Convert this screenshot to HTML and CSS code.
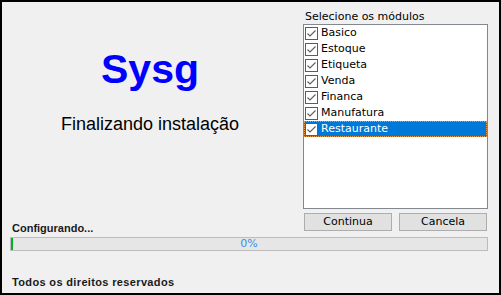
FILE: index.html
```html
<!DOCTYPE html>
<html lang="pt-BR">
<head>
    <meta charset="UTF-8">
    <title>Sysg - Instalação</title>
    <link rel="stylesheet" href="styles.css">
</head>
<body>
    <div class="window">
        <div class="layout">
            <div class="hero">
                <h1 class="logo">Sysg</h1>
                <p class="subtitle">Finalizando instalação</p>
            </div>
            <div class="modules">
                <div class="modules-label">Selecione os módulos</div>
                <ul class="module-list">
                    <li class="module"><span class="check"><svg viewBox="0 0 11 11" width="11" height="11"><path d="M1.5 5.5 L4 8 L9.5 2.5" /></svg></span>Basico</li>
                    <li class="module"><span class="check"><svg viewBox="0 0 11 11" width="11" height="11"><path d="M1.5 5.5 L4 8 L9.5 2.5" /></svg></span>Estoque</li>
                    <li class="module"><span class="check"><svg viewBox="0 0 11 11" width="11" height="11"><path d="M1.5 5.5 L4 8 L9.5 2.5" /></svg></span>Etiqueta</li>
                    <li class="module"><span class="check"><svg viewBox="0 0 11 11" width="11" height="11"><path d="M1.5 5.5 L4 8 L9.5 2.5" /></svg></span>Venda</li>
                    <li class="module"><span class="check"><svg viewBox="0 0 11 11" width="11" height="11"><path d="M1.5 5.5 L4 8 L9.5 2.5" /></svg></span>Financa</li>
                    <li class="module"><span class="check"><svg viewBox="0 0 11 11" width="11" height="11"><path d="M1.5 5.5 L4 8 L9.5 2.5" /></svg></span>Manufatura</li>
                    <li class="module selected"><span class="check"><svg viewBox="0 0 11 11" width="11" height="11"><path d="M1.5 5.5 L4 8 L9.5 2.5" /></svg></span>Restaurante</li>
                </ul>
            </div>
            <div class="status">Configurando...</div>
            <div class="actions">
                <button class="btn">Continua</button>
                <button class="btn">Cancela</button>
            </div>
        </div>
        <div class="progress">
            <div class="progress-fill" style="width: 2px"></div>
            <span class="progress-text">0%</span>
        </div>
        <div class="footer">Todos os direitos reservados</div>
    </div>
</body>
</html>
```

FILE: styles.css
```css
body {
    margin: 0;
    background-color: #000;
}
.window {
    box-sizing: border-box;
    width: 501px;
    height: 295px;
    border: 2px solid #000;
    background-color: #f0f0f0;
    padding: 7px 11px 0 0;
    overflow: hidden;
}
.layout {
    display: grid;
    grid-template-columns: 1fr 185px;
    column-gap: 5px;
    row-gap: 4px;
}
.hero {
    text-align: center;
    padding-top: 37px;
    font-family: "Liberation Sans", Arial, sans-serif;
}
.logo {
    margin: 0;
    font-size: 41px;
    line-height: 47px;
    font-weight: bold;
    color: #0000ff;
}
.subtitle {
    margin: 21px 0 0;
    font-size: 18px;
    line-height: 21px;
    color: #000;
}
.modules {
    font-family: "DejaVu Sans", sans-serif;
    font-size: 11px;
}
.modules-label {
    line-height: 15px;
    padding-left: 2px;
    color: #000;
}
.module-list {
    box-sizing: border-box;
    height: 185px;
    margin: 0;
    padding: 0;
    list-style: none;
    background: #fff;
    border: 1px solid #828790;
}
.module {
    display: flex;
    align-items: center;
    height: 16px;
    line-height: 16px;
    padding-left: 1px;
    color: #000;
}
.module.selected {
    background-color: #0078d7;
    color: #fff;
    outline: 1px dotted #e89a4a;
    outline-offset: -1px;
}
.check {
    box-sizing: border-box;
    width: 13px;
    height: 13px;
    margin: 1px 3px 0 0;
    border: 1px solid #5c5c5c;
    background: #fff;
    display: flex;
}
.check svg {
    fill: none;
    stroke: #5c5c5c;
    stroke-width: 1.1;
}
.status {
    padding: 9px 0 0 10px;
    line-height: 13px;
    font-family: "Liberation Sans", Arial, sans-serif;
    font-size: 11px;
    font-weight: bold;
    color: #1a1a1a;
}
.actions {
    display: flex;
    gap: 7px;
    padding: 0 1px;
    align-self: start;
}
.btn {
    box-sizing: border-box;
    flex: 1;
    height: 18px;
    padding: 0;
    border: 1px solid #adadad;
    background-color: #e1e1e1;
    font-family: "DejaVu Sans", sans-serif;
    font-size: 11px;
    line-height: 16px;
    color: #000;
}
.progress {
    position: relative;
    box-sizing: border-box;
    height: 14px;
    margin: 2px 0 0 8px;
    border: 1px solid #bcbcbc;
    background-color: #e6e6e6;
    text-align: center;
    font-family: "DejaVu Sans", sans-serif;
    font-size: 11px;
    line-height: 12px;
}
.progress-fill {
    position: absolute;
    left: 0;
    top: 0;
    bottom: 0;
    background-color: #06b025;
}
.progress-text {
    color: #3b8ee5;
}
.footer {
    margin-top: 25px;
    padding-left: 10px;
    line-height: 13px;
    font-family: "Liberation Sans", Arial, sans-serif;
    font-size: 11px;
    font-weight: bold;
    letter-spacing: 0.35px;
    color: #1a1a1a;
}
```
